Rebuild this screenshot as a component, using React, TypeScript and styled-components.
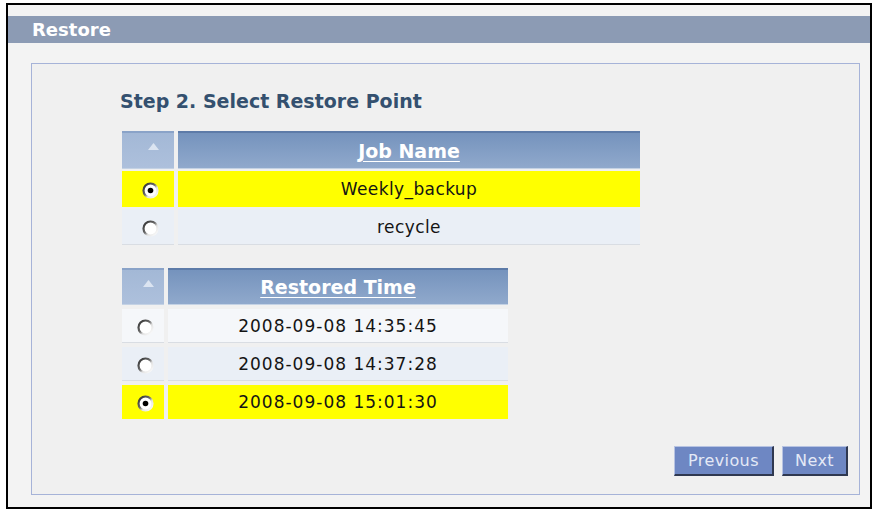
import React, { useId, useState } from "react";
import styled, { createGlobalStyle } from "styled-components";

const GlobalStyle = createGlobalStyle`
  body {
    margin: 0;
    background: #ffffff;
    font-family: "DejaVu Sans", Verdana, sans-serif;
  }
`;

const StyledFrame = styled.div`
  box-sizing: border-box;
  margin: 3px 0 0 6px;
  width: 866px;
  height: 506px;
  border: 2px solid #000000;
  background-color: #f3f3f3;
  display: flex;
  flex-direction: column;
`;

const StyledTitleBar = styled.div`
  margin-top: 11px;
  height: 27px;
  background-color: #8c9bb4;
  color: #ffffff;
  font-size: 18px;
  font-weight: 700;
  line-height: 27px;
  padding-left: 24px;
`;

const StyledPanel = styled.div`
  box-sizing: border-box;
  margin: 20px 10px 0 23px;
  height: 432px;
  border: 1px solid #a6b3d8;
  background-color: #f0f0f0;
  padding: 26px 11px 0 88px;
  display: flex;
  flex-direction: column;
`;

const StyledStepTitle = styled.div`
  color: #34506f;
  font-size: 19px;
  font-weight: 700;
  line-height: 23px;
  margin-bottom: 18px;
`;

const StyledTable = styled.div<{
  $first: number;
  $second: number;
  $gap: number;
  $head: number;
  $row: number;
}>`
  display: grid;
  grid-template-columns: ${(p) => p.$first}px ${(p) => p.$second}px;
  grid-template-rows: ${(p) => p.$head}px;
  grid-auto-rows: ${(p) => p.$row}px;
  column-gap: 4px;
  row-gap: ${(p) => p.$gap}px;
  margin-left: 2px;
  margin-bottom: 23px;
`;

const StyledHeadCell = styled.div<{ $light?: boolean }>`
  box-sizing: border-box;
  border-top: 2px solid ${(p) => (p.$light ? "#8aa3c8" : "#5d7ba8")};
  border-bottom: 1px solid #c4d2e4;
  background: ${(p) =>
    p.$light
      ? "linear-gradient(#a3b8d6, #adc0dc)"
      : "linear-gradient(#7593bd, #90a9cc)"};
  display: flex;
  justify-content: center;
  align-items: ${(p) => (p.$light ? "flex-start" : "center")};
  color: #ffffff;
  font-size: 19px;
  font-weight: 700;
`;

const StyledSortArrow = styled.svg`
  margin: 10px 0 0 10px;
`;

const StyledHeadLink = styled.span`
  text-decoration: underline;
  text-underline-offset: 3px;
  cursor: pointer;
`;

const StyledCell = styled.div<{ $selected: boolean; $shade: string; $wide?: boolean }>`
  box-sizing: border-box;
  border-bottom: 1px solid ${(p) => (p.$selected ? "#ffff00" : "#d9dde3")};
  background-color: ${(p) => (p.$selected ? "#ffff00" : p.$shade)};
  display: flex;
  justify-content: center;
  align-items: center;
  color: #141414;
  font-size: 17px;
  letter-spacing: ${(p) => (p.$wide ? "1px" : "0.4px")};
  cursor: pointer;
`;

const StyledRadioWrap = styled.span`
  display: flex;
  margin: 3px 0 0 4px;
`;

const StyledButtonBar = styled.div`
  margin-top: auto;
  margin-bottom: 18px;
  display: flex;
  justify-content: flex-end;
  gap: 8px;
`;

const StyledButton = styled.button<{ $width: number }>`
  box-sizing: border-box;
  width: ${(p) => p.$width}px;
  height: 30px;
  padding: 0;
  background-color: #6e87c3;
  border-style: solid;
  border-width: 1px 2px 2px 1px;
  border-color: #b7c3e2 #2f3850 #2f3850 #b7c3e2;
  color: #e4e9f6;
  font-family: "DejaVu Sans", Verdana, sans-serif;
  font-size: 16px;
  letter-spacing: 0.4px;
  cursor: pointer;
`;

interface IRadioProps {
  checked: boolean;
}

const Radio = ({ checked }: IRadioProps) => {
  const id = useId();
  return (
    <StyledRadioWrap>
      <svg width="17" height="17" viewBox="0 0 17 17">
        <defs>
          <linearGradient id={id} x1="0" y1="0" x2="1" y2="1">
            <stop offset="0" stopColor="#2e2e2e" />
            <stop offset="0.45" stopColor="#6a6a6a" />
            <stop offset="0.62" stopColor="#e2e2e2" />
            <stop offset="1" stopColor="#ffffff" />
          </linearGradient>
        </defs>
        <circle cx="8.5" cy="8.5" r="7" fill="#ffffff" stroke={`url(#${id})`} strokeWidth="2.2" />
        {checked && <circle cx="8.5" cy="8.5" r="2.8" fill="#000000" />}
      </svg>
    </StyledRadioWrap>
  );
};

const SortArrow = () => (
  <StyledSortArrow width="11" height="7" viewBox="0 0 11 7">
    <polygon points="5.5,0 11,7 0,7" fill="#dbe4f1" />
  </StyledSortArrow>
);

const jobs = ["Weekly_backup", "recycle"];
const times = ["2008-09-08 14:35:45", "2008-09-08 14:37:28", "2008-09-08 15:01:30"];
const shades = ["#f5f7fa", "#eaeff6"];

const App = () => {
  const [job, setJob] = useState(0);
  const [time, setTime] = useState(2);

  return (
    <>
      <GlobalStyle />
      <StyledFrame>
        <StyledTitleBar>Restore</StyledTitleBar>
        <StyledPanel>
          <StyledStepTitle>Step 2. Select Restore Point</StyledStepTitle>

          <StyledTable $first={52} $second={462} $gap={2} $head={38} $row={36}>
            <StyledHeadCell $light>
              <SortArrow />
            </StyledHeadCell>
            <StyledHeadCell>
              <StyledHeadLink>Job Name</StyledHeadLink>
            </StyledHeadCell>
            {jobs.map((name, i) => (
              <React.Fragment key={name}>
                <StyledCell $selected={job === i} $shade={shades[1]} onClick={() => setJob(i)}>
                  <Radio checked={job === i} />
                </StyledCell>
                <StyledCell $selected={job === i} $shade={shades[1]} onClick={() => setJob(i)}>
                  {name}
                </StyledCell>
              </React.Fragment>
            ))}
          </StyledTable>

          <StyledTable $first={42} $second={340} $gap={4} $head={37} $row={34}>
            <StyledHeadCell $light>
              <SortArrow />
            </StyledHeadCell>
            <StyledHeadCell>
              <StyledHeadLink>Restored Time</StyledHeadLink>
            </StyledHeadCell>
            {times.map((value, i) => (
              <React.Fragment key={value}>
                <StyledCell $selected={time === i} $shade={shades[i % 2]} onClick={() => setTime(i)}>
                  <Radio checked={time === i} />
                </StyledCell>
                <StyledCell
                  $selected={time === i}
                  $shade={shades[i % 2]}
                  $wide
                  onClick={() => setTime(i)}
                >
                  {value}
                </StyledCell>
              </React.Fragment>
            ))}
          </StyledTable>

          <StyledButtonBar>
            <StyledButton $width={100}>Previous</StyledButton>
            <StyledButton $width={66}>Next</StyledButton>
          </StyledButtonBar>
        </StyledPanel>
      </StyledFrame>
    </>
  );
};

export default App;
